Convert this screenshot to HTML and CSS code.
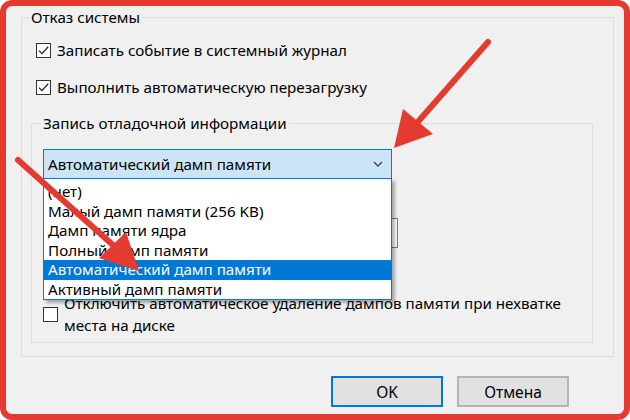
FILE: index.html
```html
<!DOCTYPE html>
<html lang="ru">
<head>
<meta charset="utf-8">
<title>Загрузка и восстановление</title>
<link rel="stylesheet" href="styles.css">
</head>
<body>
<div class="frame">
  <fieldset class="group outer">
    <legend>Отказ системы</legend>
    <label class="check first"><span class="box"><svg viewBox="0 0 15 15" width="15" height="15"><path d="M3 7.6 L6 10.6 L12.2 3.8" fill="none" stroke="#222" stroke-width="1.3"/></svg></span>Записать событие в системный журнал</label>
    <label class="check second"><span class="box"><svg viewBox="0 0 15 15" width="15" height="15"><path d="M3 7.6 L6 10.6 L12.2 3.8" fill="none" stroke="#222" stroke-width="1.3"/></svg></span>Выполнить автоматическую перезагрузку</label>
    <fieldset class="group inner">
      <legend>Запись отладочной информации</legend>
      <div class="combo-wrap">
        <div class="combo"><span>Автоматический дамп памяти</span><svg class="chev" viewBox="0 0 10 6" width="10" height="6"><path d="M1 1 L5 5 L9 1" fill="none" stroke="#444" stroke-width="1.4"/></svg></div>
        <ul class="list">
          <li>(нет)</li>
          <li>Малый дамп памяти (256 KB)</li>
          <li>Дамп памяти ядра</li>
          <li>Полный дамп памяти</li>
          <li class="sel">Автоматический дамп памяти</li>
          <li>Активный дамп памяти</li>
        </ul>
      </div>
      <div class="field"></div>
      <label class="check multi"><span class="box"></span><span>Отключить автоматическое удаление дампов памяти при нехватке<br>места на диске</span></label>
    </fieldset>
  </fieldset>
  <div class="buttons">
    <button class="btn default">OK</button>
    <button class="btn">Отмена</button>
  </div>
  <svg class="arrows" viewBox="0 0 630 420" width="630" height="420">
    <line x1="488" y1="42" x2="416" y2="124" stroke="#e53a2f" stroke-width="6" stroke-linecap="round"/>
    <polygon points="394,148 403,109 433,134" fill="#e53a2f"/>
    <line x1="18" y1="160" x2="114" y2="246" stroke="#e53a2f" stroke-width="6" stroke-linecap="round"/>
    <polygon points="139,271 99,258 126,232" fill="#e53a2f"/>
  </svg>
</div>
</body>
</html>
```
FILE: styles.css
```css
* { box-sizing: border-box; }
html, body { margin: 0; padding: 0; background: #ffffff; }
body {
  width: 630px;
  height: 420px;
  overflow: hidden;
  font-family: "Noto Sans", "Open Sans", sans-serif;
  font-size: 15.2px;
  color: #000;
}
.frame {
  position: relative;
  width: 630px;
  height: 420px;
  border: 6px solid #e53a2f;
  border-radius: 12px;
  background: #f0f0f0;
  padding-top: 1px;
}
.group {
  margin: 0;
  border: 1px solid #dcdcdc;
  min-width: 0;
}
.group legend {
  padding: 0 2px;
  margin-left: -2px;
  line-height: 20px;
}
.outer {
  margin: 0 10px 0 15px;
  padding: 0 20px 13px 9px;
}
.inner {
  margin-top: 15px;
  padding: 0 11px 6px 11px;
}
.check {
  display: flex;
  align-items: center;
  gap: 6px;
  line-height: 22px;
}
.outer > .check { margin-left: 5px; }
.check.first { margin-top: 12px; }
.check.second { margin-top: 15px; }
.box {
  width: 15px;
  height: 15px;
  flex: none;
  border: 1px solid #333;
  background: #fff;
  display: flex;
  align-items: center;
  justify-content: center;
}
.box svg { display: block; margin: -1px; }
.combo-wrap {
  position: relative;
  margin-top: 16px;
  width: 349px;
}
.combo {
  height: 30px;
  border: 1px solid #0078d7;
  background: #cce4f7;
  display: flex;
  align-items: center;
  justify-content: space-between;
  padding: 0 8px 0 4px;
}
.chev { display: block; }
.list {
  position: absolute;
  z-index: 2;
  left: 0;
  top: calc(100% - 1px);
  width: 349px;
  margin: 0;
  padding: 3px 0 0 0;
  list-style: none;
  background: #fff;
  border: 1px solid #0078d7;
  box-shadow: 3px 3px 3px rgba(0, 0, 0, 0.3);
}
.list li {
  height: 19.5px;
  line-height: 19.5px;
  padding-left: 4px;
  white-space: nowrap;
}
.list li.sel {
  background: #0078d7;
  color: #fff;
}
.field {
  margin-top: 39px;
  width: 355px;
  height: 30px;
  border: 1px solid #7a7a7a;
  background: #fff;
}
.check.multi { margin-top: 44px; }
.buttons {
  display: flex;
  justify-content: flex-end;
  gap: 14px;
  margin-top: 19px;
  padding-right: 55px;
}
.btn {
  width: 112px;
  height: 31px;
  font-family: inherit;
  font-size: 15.5px;
  color: #000;
  background: #e1e1e1;
  border: 2px solid #b4b4b4;
  padding: 0;
}
.btn.default { border-color: #0078d7; }
.arrows {
  position: absolute;
  left: -6px;
  top: -6px;
  z-index: 5;
  pointer-events: none;
}
```
